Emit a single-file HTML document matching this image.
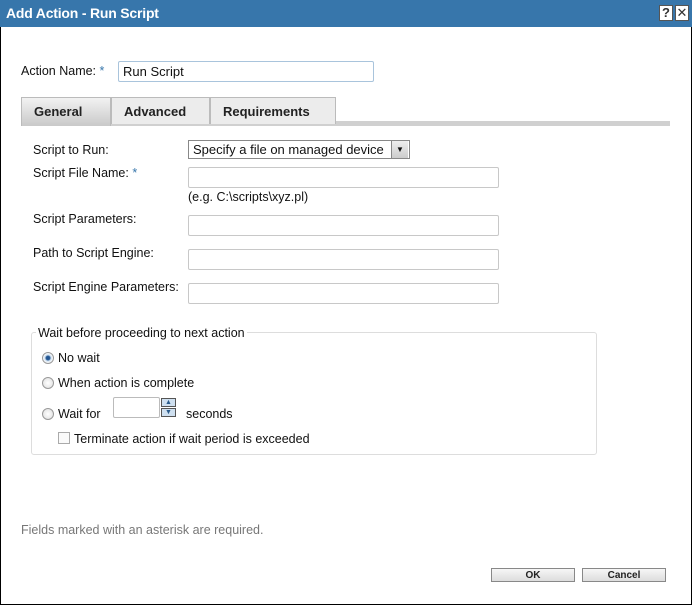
<!DOCTYPE html>
<html><head><style>
*{box-sizing:border-box}
body{margin:0;width:692px;height:605px;background:#fff;font-family:"Liberation Sans",sans-serif;font-size:12.5px;color:#111;position:relative;overflow:hidden}
.frame{position:absolute;left:0;top:0;width:692px;height:605px;border:1px solid #000}
.title{position:absolute;left:0;top:0;width:692px;height:27px;background:#3776ab;color:#fff;font-weight:bold;font-size:14px;line-height:27px;padding-left:6px;letter-spacing:-0.2px}
.tb{position:absolute;top:5px;width:14px;height:16px;background:#fff;border:1px solid #555;color:#333;font-size:13px;line-height:14px;text-align:center;font-weight:bold}
.a{position:absolute;white-space:nowrap}
.in{position:absolute;border:1px solid #c8c8c8;background:#fff;border-radius:2px}
.star{color:#3776ab}
.tab{position:absolute;top:97px;height:27px;border:1px solid #bbb;border-bottom:none;background:#ececec;font-weight:bold;font-size:13px;line-height:27px;padding-left:12px;color:#222}
.radio{position:absolute;width:12px;height:12px;border-radius:50%;border:1px solid #999;background:radial-gradient(#fff,#ddd)}
.btn{position:absolute;top:568px;height:14px;border:1px solid #888;background:linear-gradient(#f6f6f6,#ddd);font-weight:bold;font-size:10px;text-align:center;line-height:13px;color:#222}
</style></head><body>
<div class="frame"></div>
<div class="title">Add Action - Run Script</div>
<div class="tb" style="left:659px">?</div>
<div class="tb" style="left:675px;font-weight:normal">✕</div>

<div class="a" style="left:21px;top:64px">Action Name: <span class="star">*</span></div>
<div class="in" style="left:118px;top:61px;width:256px;height:21px;border-color:#a9c4dc;padding:2px 4px;font-size:13px">Run Script</div>

<div style="position:absolute;left:21px;top:121px;width:649px;height:5px;background:#d0d0d0"></div>
<div class="tab" style="left:21px;width:90px;background:linear-gradient(#f2f2f2,#c9c9c9);height:29px">General</div>
<div class="tab" style="left:111px;width:99px;top:97px;background:#ececec">Advanced</div>
<div class="tab" style="left:210px;width:126px">Requirements</div>

<div class="a" style="left:33px;top:143px">Script to Run:</div>
<div class="in" style="left:188px;top:140px;width:222px;height:19px;border-color:#888;border-radius:0;padding:1px 4px;font-size:13px;color:#111">Specify a file on managed device</div>
<div style="position:absolute;left:391px;top:141px;width:17px;height:17px;background:linear-gradient(#eee,#ccc);border-left:1px solid #888;font-size:8px;text-align:center;line-height:17px">▼</div>

<div class="a" style="left:33px;top:166px">Script File Name: <span class="star">*</span></div>
<div class="in" style="left:188px;top:167px;width:311px;height:21px"></div>
<div class="a" style="left:188px;top:190px">(e.g. C:\scripts\xyz.pl)</div>
<div class="a" style="left:33px;top:212px">Script Parameters:</div>
<div class="in" style="left:188px;top:215px;width:311px;height:21px"></div>
<div class="a" style="left:33px;top:246px">Path to Script Engine:</div>
<div class="in" style="left:188px;top:249px;width:311px;height:21px"></div>
<div class="a" style="left:33px;top:280px">Script Engine Parameters:</div>
<div class="in" style="left:188px;top:283px;width:311px;height:21px"></div>

<div style="position:absolute;left:31px;top:332px;width:566px;height:123px;border:1px solid #ddd;border-radius:3px"></div>
<div class="a" style="left:36px;top:326px;background:#fff;padding:0 2px">Wait before proceeding to next action</div>
<div class="radio" style="left:42px;top:352px;background:radial-gradient(#1f4f8a 0,#2d5f9a 2px,#cfe0f0 3px,#fff 5px)"></div>
<div class="a" style="left:58px;top:351px">No wait</div>
<div class="radio" style="left:42px;top:377px"></div>
<div class="a" style="left:58px;top:376px">When action is complete</div>
<div class="radio" style="left:42px;top:408px"></div>
<div class="a" style="left:58px;top:407px">Wait for</div>
<div class="in" style="left:113px;top:397px;width:47px;height:21px;border-color:#bbb"></div>
<div style="position:absolute;left:161px;top:398px;width:15px;height:9px;border:1px solid #555;background:#cfe0f0;font-size:7px;line-height:7px;text-align:center;color:#2a5a8a">▲</div>
<div style="position:absolute;left:161px;top:408px;width:15px;height:9px;border:1px solid #555;background:#cfe0f0;font-size:7px;line-height:7px;text-align:center;color:#2a5a8a">▼</div>
<div class="a" style="left:186px;top:407px">seconds</div>
<div style="position:absolute;left:58px;top:432px;width:12px;height:12px;border:1px solid #aaa;background:#fafafa"></div>
<div class="a" style="left:74px;top:432px">Terminate action if wait period is exceeded</div>

<div class="a" style="left:21px;top:523px;color:#777">Fields marked with an asterisk are required.</div>
<div class="btn" style="left:491px;width:84px">OK</div>
<div class="btn" style="left:582px;width:84px">Cancel</div>
</body></html>
